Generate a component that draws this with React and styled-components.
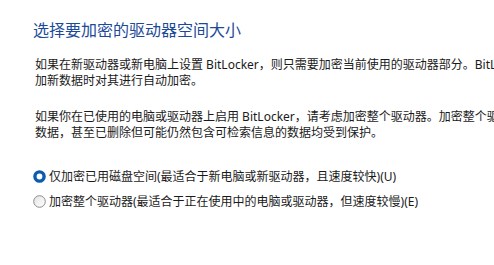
import React from 'react';
import styled, { createGlobalStyle } from 'styled-components';

const GlobalStyle = createGlobalStyle`
  html, body {
    margin: 0;
    padding: 0;
    background: #ffffff;
  }
  body {
    font-family: "Noto Sans", "Noto Sans CJK SC", sans-serif;
    overflow: hidden;
  }
`;

const Page = styled.div`
  width: 494px;
  height: 265px;
  overflow: hidden;
  padding: 19px 0 0 33px;
  box-sizing: border-box;
  background: #ffffff;
`;

const Title = styled.h1`
  margin: 0;
  font-family: "Noto Sans CJK SC", sans-serif;
  font-size: 16px;
  font-weight: 400;
  line-height: 20px;
  color: #1c4a98;
  white-space: nowrap;
`;

const Paragraph = styled.p`
  margin: ${(p) => p.$top}px 0 0 2px;
  font-family: "Noto Sans", "Noto Sans CJK SC", sans-serif;
  font-size: 12px;
  line-height: 16px;
  color: #1a1a1a;
  white-space: nowrap;
`;

const Options = styled.div`
  display: flex;
  flex-direction: column;
  gap: 5px;
  margin-top: 25px;
`;

const Option = styled.label`
  display: flex;
  align-items: center;
  gap: 3px;
  height: 20px;
  font-family: "Noto Sans", "Noto Sans CJK SC", sans-serif;
  font-size: 12px;
  color: #1a1a1a;
  white-space: nowrap;
  cursor: pointer;
`;

const RadioMark = ({ checked }) => (
  <svg width="13" height="13" viewBox="0 0 13 13">
    <defs>
      <linearGradient id="rg" x1="0" y1="0" x2="1" y2="1">
        <stop offset="0" stopColor="#e4e4e4" />
        <stop offset="1" stopColor="#ffffff" />
      </linearGradient>
    </defs>
    {checked ? (
      <circle cx="6.5" cy="6.5" r="4.6" fill="#ffffff" stroke="#0b5cad" strokeWidth="3.4" />
    ) : (
      <circle cx="6.5" cy="6.5" r="5.8" fill="url(#rg)" stroke="#8c8c8c" strokeWidth="1" />
    )}
  </svg>
);

export default function App() {
  return (
    <Page>
      <GlobalStyle />
      <Title>选择要加密的驱动器空间大小</Title>
      <Paragraph $top={18}>
        如果在新驱动器或新电脑上设置 BitLocker，则只需要加密当前使用的驱动器部分。BitLocker 会在你添
        <br />
        加新数据时对其进行自动加密。
      </Paragraph>
      <Paragraph $top={20}>
        如果你在已使用的电脑或驱动器上启用 BitLocker，请考虑加密整个驱动器。加密整个驱动器可确保所有
        <br />
        数据，甚至已删除但可能仍然包含可检索信息的数据均受到保护。
      </Paragraph>
      <Options>
        <Option>
          <RadioMark checked />
          仅加密已用磁盘空间(最适合于新电脑或新驱动器，且速度较快)(U)
        </Option>
        <Option>
          <RadioMark />
          加密整个驱动器(最适合于正在使用中的电脑或驱动器，但速度较慢)(E)
        </Option>
      </Options>
    </Page>
  );
}
